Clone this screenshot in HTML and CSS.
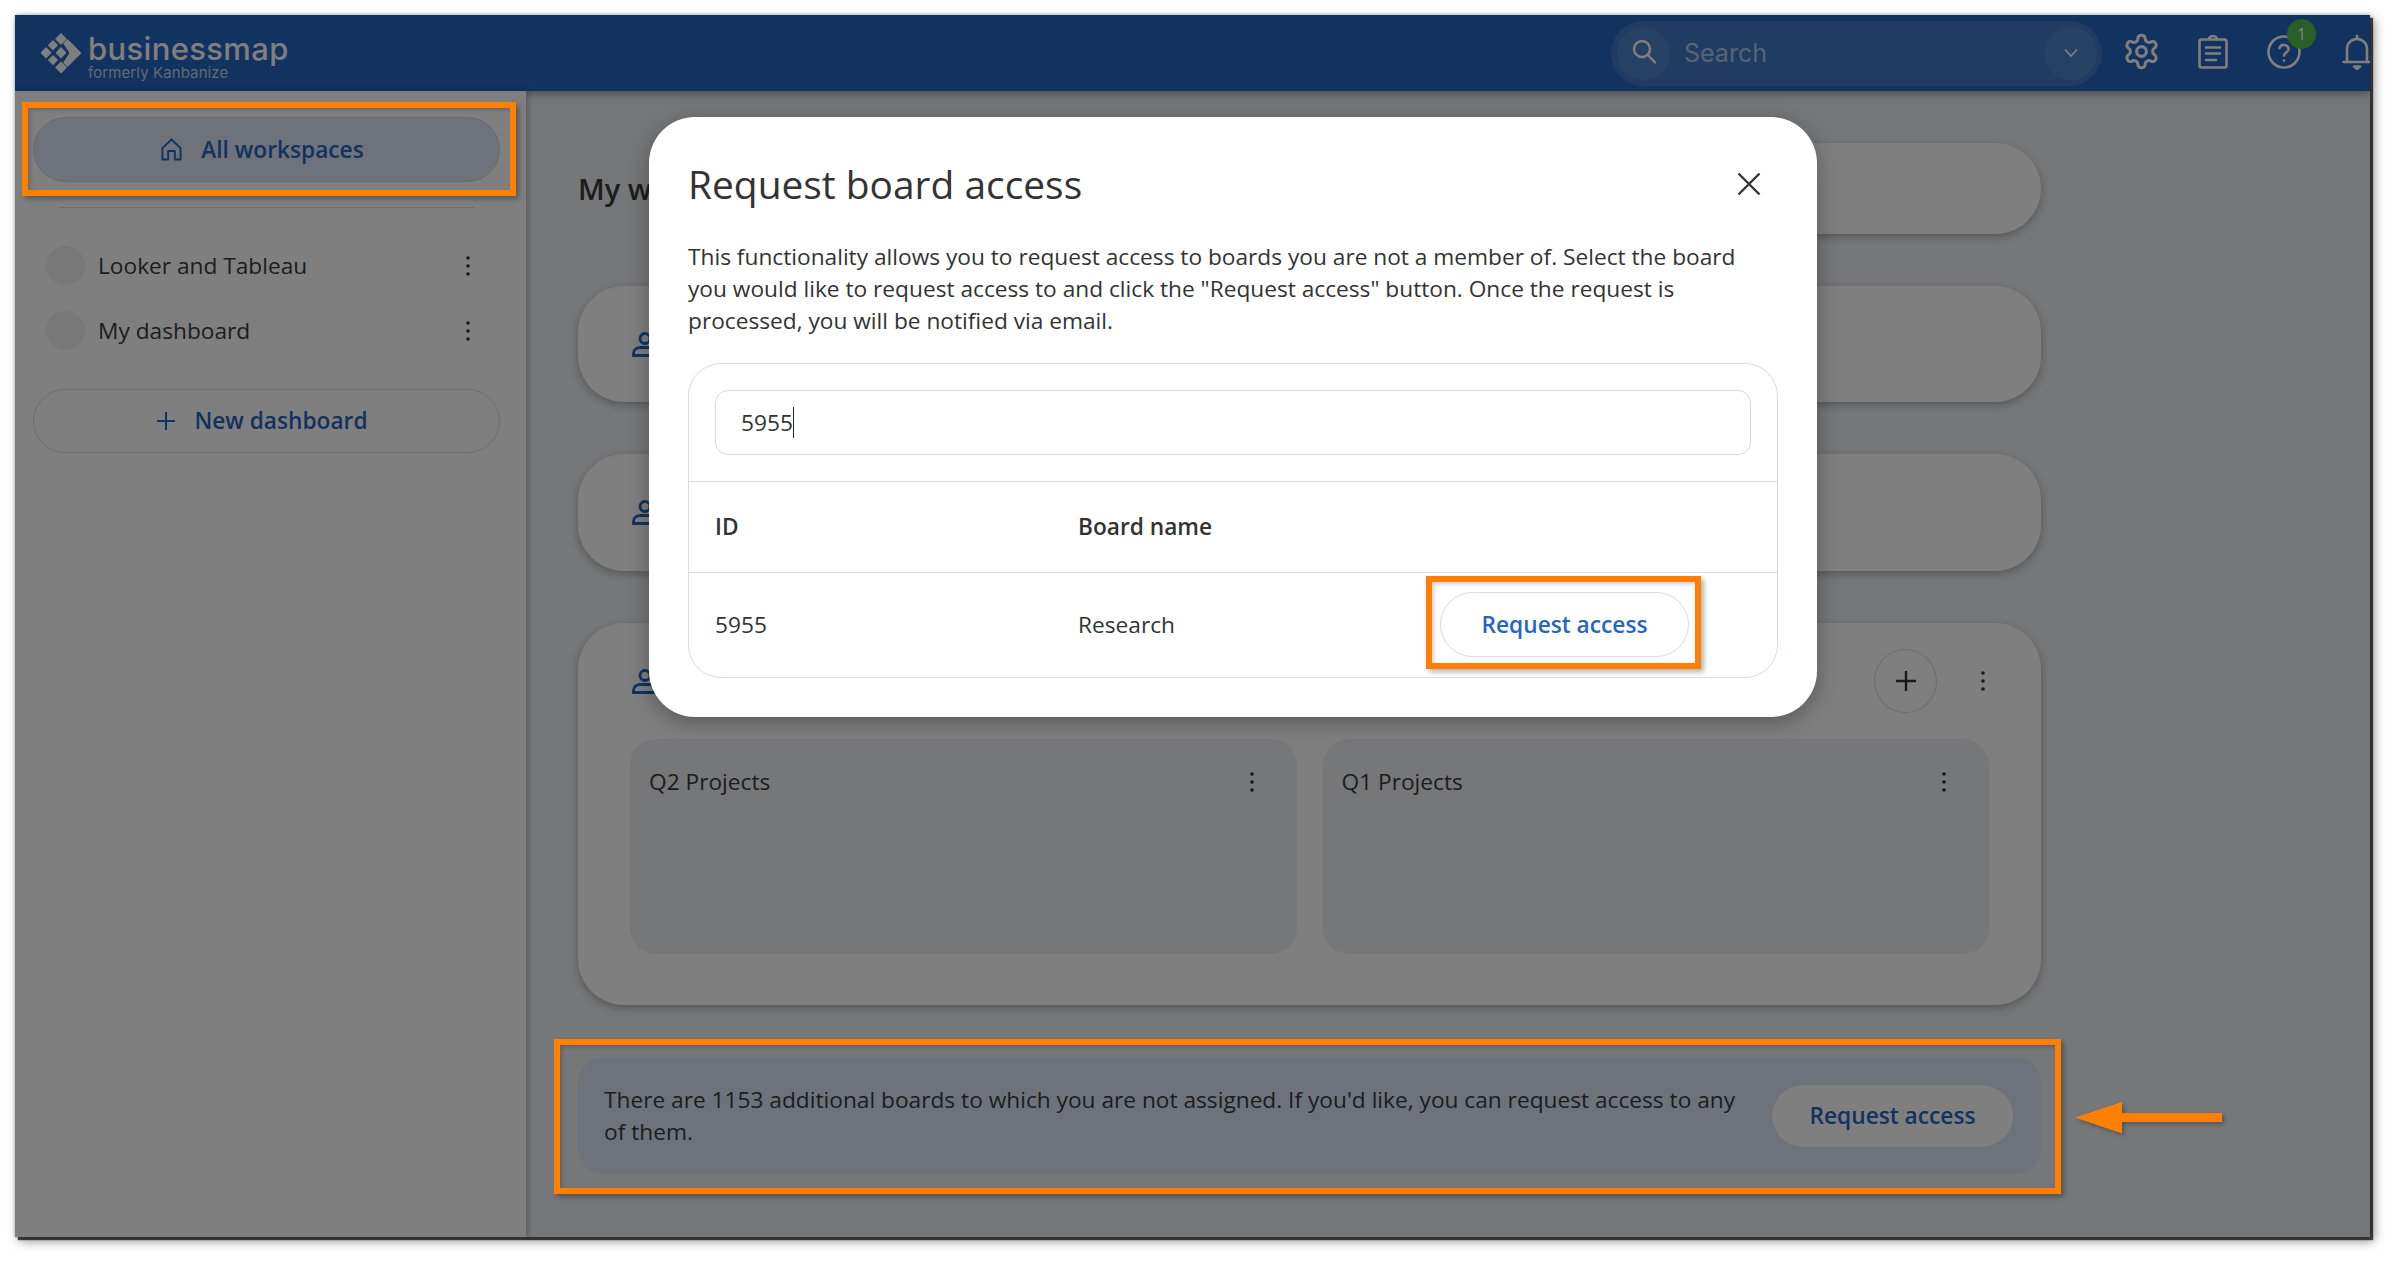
FILE: index.html
```html
<!DOCTYPE html>
<html lang="en">
<head>
<meta charset="utf-8">
<title>Request board access</title>
<link rel="stylesheet" href="styles.css">
</head>
<body>
<div class="app">
  <header class="topbar">
    <div class="logo">
      <svg class="logo-mark" viewBox="0 0 40 40" fill="#fff" stroke="#fff" stroke-width="1.400" stroke-linejoin="round">
        <path d="M20 1 25 6 20 11 15 6z"/>
        <path d="M12 8 16.200 12.300 12 16.500 7.800 12.300z"/>
        <path d="M5 15 9.800 19.800 5 24.500 .5 19.800z"/>
        <path d="M20 15 24.500 19.800 20 24.500 15.500 19.800z"/>
        <path d="M12 23 16.200 27 12 31.200 7.800 27z"/>
        <path d="M20 29.500 25 34.500 20 39.500 15 34.500z"/>
        <path d="M26.500 7 39.500 20 26.500 33 23 29.500 29.500 20 23 10.500z"/>
      </svg>
      <div class="logo-text">
        <span class="logo-name">businessmap</span>
        <span class="logo-sub">formerly Kanbanize</span>
      </div>
    </div>
    <div class="search">
      <span class="search-btn">
        <svg class="icon-search" viewBox="0 0 26 26" fill="none" stroke="#fff" stroke-width="2.400" stroke-linecap="round"><circle cx="11" cy="10" r="8"/><path d="M17 16 24 23.500"/></svg>
      </span>
      <span class="search-label">Search</span>
      <span class="search-btn">
        <svg class="icon-chev" viewBox="0 0 14 10" fill="none" stroke="#fff" stroke-width="1.800" stroke-linecap="round" stroke-linejoin="round"><path d="M1.500 2 7 8l5.500-6"/></svg>
      </span>
    </div>
    <div class="top-icons">
      <span class="top-icon">
        <svg class="icon-gear" viewBox="0 0 24 24" fill="none" stroke="#fff" stroke-width="1.900" stroke-linecap="round" stroke-linejoin="round"><path d="M12.220 2h-.44a2 2 0 0 0-2 2v.18a2 2 0 0 1-1 1.730l-.43.25a2 2 0 0 1-2 0l-.15-.08a2 2 0 0 0-2.730.73l-.22.38a2 2 0 0 0 .73 2.730l.15.1a2 2 0 0 1 1 1.720v.51a2 2 0 0 1-1 1.740l-.15.09a2 2 0 0 0-.73 2.730l.22.38a2 2 0 0 0 2.730.73l.15-.08a2 2 0 0 1 2 0l.43.25a2 2 0 0 1 1 1.730V20a2 2 0 0 0 2 2h.44a2 2 0 0 0 2-2v-.18a2 2 0 0 1 1-1.730l.43-.25a2 2 0 0 1 2 0l.15.08a2 2 0 0 0 2.730-.73l.22-.39a2 2 0 0 0-.73-2.730l-.15-.08a2 2 0 0 1-1-1.740v-.5a2 2 0 0 1 1-1.740l.15-.09a2 2 0 0 0 .73-2.730l-.22-.38a2 2 0 0 0-2.730-.73l-.15.08a2 2 0 0 1-2 0l-.43-.25a2 2 0 0 1-1-1.730V4a2 2 0 0 0-2-2z"/><circle cx="12" cy="12" r="3"/></svg>
      </span>
      <span class="top-icon">
        <svg class="icon-clip" viewBox="0 0 30 34" fill="none" stroke="#fff" stroke-width="2.600" stroke-linecap="round" stroke-linejoin="round"><rect x="1.500" y="4.500" width="27" height="28" rx="2"/><path d="M11 4.500a4 3.500 0 0 1 8 0M8 12.500h14M8 18.500h14M8 25h10"/></svg>
      </span>
      <span class="top-icon">
        <svg class="icon-help" viewBox="0 0 34 34" fill="none" stroke="#fff" stroke-width="2.600" stroke-linecap="round" stroke-linejoin="round"><circle cx="17" cy="17" r="15.500"/><path d="M12.500 13a4.700 4.700 0 0 1 9.100 1.300c0 3-4.500 3.500-4.500 6.200"/><path d="M17 25.500v.3"/></svg>
        <span class="badge">1</span>
      </span>
      <span class="top-icon">
        <svg class="icon-bell" viewBox="0 0 30 36" fill="none" stroke="#fff" stroke-width="2.600" stroke-linecap="round" stroke-linejoin="round"><path d="M1.500 28h27M5 28V15a10 10 0 0 1 20 0v13"/><path d="M15 1.800v3" /><path d="M12 32.500h6l-3 2.500z" fill="#fff"/></svg>
      </span>
    </div>
  </header>

  <div class="body-row">
    <aside class="sidebar">
      <div class="side-primary">
        <svg class="icon-home" viewBox="0 0 22 24" fill="none" stroke="currentColor" stroke-width="2" stroke-linejoin="round"><path d="M1.500 10.500 11 1.500l9.500 9v12h-6v-9h-7v9h-6z"/></svg>
        <span>All workspaces</span>
      </div>
      <div class="side-divider"></div>
      <div class="side-item">
        <span class="side-dot"></span>
        <span class="side-name">Looker and Tableau</span>
        <svg class="dots" viewBox="0 0 6 22" fill="currentColor"><circle cx="3" cy="3" r="1.800"/><circle cx="3" cy="11" r="1.800"/><circle cx="3" cy="19" r="1.800"/></svg>
      </div>
      <div class="side-item">
        <span class="side-dot"></span>
        <span class="side-name">My dashboard</span>
        <svg class="dots" viewBox="0 0 6 22" fill="currentColor"><circle cx="3" cy="3" r="1.800"/><circle cx="3" cy="11" r="1.800"/><circle cx="3" cy="19" r="1.800"/></svg>
      </div>
      <div class="side-new">
        <svg class="icon-plus" viewBox="0 0 18 18" fill="none" stroke="currentColor" stroke-width="2"><path d="M9 0v18M0 9h18"/></svg>
        <span>New dashboard</span>
      </div>
    </aside>

    <main class="content">
      <div class="intro">
        <h2 class="intro-title">My workspaces</h2>
        <div class="intro-card"></div>
      </div>
      <section class="ws ws-short">
        <svg class="icon-person" viewBox="0 0 26 25" fill="none" stroke="currentColor" stroke-width="2.800"><circle cx="13" cy="6.500" r="5"/><path d="M1.500 23.500v-2c0-4 3-6 7-6h9c4 0 7 2 7 6v2z"/></svg>
      </section>
      <section class="ws ws-short ws-short-b">
        <svg class="icon-person" viewBox="0 0 26 25" fill="none" stroke="currentColor" stroke-width="2.800"><circle cx="13" cy="6.500" r="5"/><path d="M1.500 23.500v-2c0-4 3-6 7-6h9c4 0 7 2 7 6v2z"/></svg>
      </section>
      <section class="ws ws-full">
        <div class="ws-head">
          <svg class="icon-person" viewBox="0 0 26 25" fill="none" stroke="currentColor" stroke-width="2.800"><circle cx="13" cy="6.500" r="5"/><path d="M1.500 23.500v-2c0-4 3-6 7-6h9c4 0 7 2 7 6v2z"/></svg>
          <span class="round-add">
            <svg class="icon-add" viewBox="0 0 20 20" fill="none" stroke="currentColor" stroke-width="2.400"><path d="M10 0v20M0 10h20"/></svg>
          </span>
          <svg class="dots" viewBox="0 0 6 22" fill="currentColor"><circle cx="3" cy="3" r="1.800"/><circle cx="3" cy="11" r="1.800"/><circle cx="3" cy="19" r="1.800"/></svg>
        </div>
        <div class="boards">
          <div class="board">
            <span>Q2 Projects</span>
            <svg class="dots" viewBox="0 0 6 22" fill="currentColor"><circle cx="3" cy="3" r="1.800"/><circle cx="3" cy="11" r="1.800"/><circle cx="3" cy="19" r="1.800"/></svg>
          </div>
          <div class="board">
            <span>Q1 Projects</span>
            <svg class="dots" viewBox="0 0 6 22" fill="currentColor"><circle cx="3" cy="3" r="1.800"/><circle cx="3" cy="11" r="1.800"/><circle cx="3" cy="19" r="1.800"/></svg>
          </div>
        </div>
      </section>
      <section class="notice">
        <p class="notice-text">There are 1153 additional boards to which you are not assigned. If you'd like, you can request access to any of them.</p>
        <span class="notice-btn">Request access</span>
      </section>
    </main>
  </div>
  <div class="scrim"></div>
</div>

<div class="modal">
  <div class="modal-head">
    <h1 class="modal-title">Request board access</h1>
    <svg class="icon-close" viewBox="0 0 24 24" fill="none" stroke="currentColor" stroke-width="2.400"><path d="M1.500 1.500l21 21M22.500 1.500l-21 21"/></svg>
  </div>
  <p class="modal-desc">This functionality allows you to request access to boards you are not a member of. Select the board you would like to request access to and click the "Request access" button. Once the request is processed, you will be notified via email.</p>
  <div class="picker">
    <div class="picker-search">
      <div class="picker-input">5955<span class="caret"></span></div>
    </div>
    <div class="picker-row picker-head">
      <span>ID</span>
      <span>Board name</span>
    </div>
    <div class="picker-row picker-item">
      <span>5955</span>
      <span>Research</span>
      <span class="access-btn">Request access</span>
    </div>
  </div>
</div>

<div class="callout callout-side"></div>
<div class="callout callout-btn"></div>
<div class="callout callout-notice"></div>
<svg class="callout-arrow" viewBox="0 0 147 32" fill="#ff8000"><path d="M0 15.500 47 0v11h100v9H47v11.500z"/></svg>
</body>
</html>
```

FILE: styles.css
```css
* { box-sizing: border-box; }
html, body { margin: 0; padding: 0; }
body {
  width: 2396px;
  height: 1264px;
  overflow: hidden;
  background: #fff;
  padding: 15px 26px 27px 15px;
  font-family: "Open Sans", "Noto Sans", sans-serif;
  font-size: 22.7px;
  line-height: 32px;
  color: #3a3a3a;
}
h1, h2, p { margin: 0; font-weight: 400; }

.app {
  position: relative;
  width: 100%;
  height: 100%;
  display: flex;
  flex-direction: column;
  overflow: hidden;
  background: #eceef2;
  box-shadow: 3px 3px 1px rgba(0,0,0,.7), 4px 4px 10px rgba(0,0,0,.45), 0 0 3px rgba(0,0,0,.3);
}
.scrim { position: absolute; inset: 0; background: rgba(0,0,0,.5); }

/* top bar */
.topbar {
  flex: none;
  height: 76px;
  display: flex;
  align-items: center;
  padding-left: 26px;
  background: #2464be;
  color: #fff;
  box-shadow: 0 3px 8px rgba(0,0,0,.35);
  position: relative;
  overflow: hidden;
}
.logo { flex: 1; display: flex; align-items: center; gap: 7px; }
.logo-mark { width: 40px; height: 40px; }
.logo-text { display: flex; flex-direction: column; font-family: "Inter", sans-serif; margin-top: 7px; }
.logo-name { font-size: 31px; line-height: 32px; font-weight: 500; letter-spacing: .35px; }
.logo-sub { font-size: 15px; line-height: 15px; color: rgba(255,255,255,.72); letter-spacing: .1px; }
.search {
  flex: none;
  width: 491px;
  height: 65px;
  margin-right: 3px;
  padding: 0 5px 0 6px;
  display: flex;
  align-items: center;
  gap: 14px;
  border-radius: 33px;
  background: rgba(255,255,255,.13);
}
.search-btn {
  flex: none;
  width: 53px;
  height: 53px;
  display: flex;
  align-items: center;
  justify-content: center;
  border-radius: 50%;
  background: rgba(255,255,255,.08);
}
.search-label {
  flex: 1;
  font-family: "Inter", sans-serif;
  font-size: 25px;
  color: rgba(255,255,255,.6);
}
.icon-search { width: 26px; height: 26px; margin: -2px 0 0 0; }
.icon-chev { width: 14px; height: 10px; }
.top-icons { flex: none; width: 265px; display: flex; }
.top-icon {
  flex: none;
  position: relative;
  width: 72px;
  height: 76px;
  display: flex;
  align-items: center;
  justify-content: center;
}
.icon-gear { width: 39px; height: 39px; margin-top: -3px; }
.icon-clip { width: 30px; height: 34px; margin-top: -3px; }
.icon-help { width: 34px; height: 34px; margin: -3px 2px 0 0; }
.icon-bell { width: 30px; height: 36px; margin-top: -3px; }
.badge {
  position: absolute;
  left: 38px;
  top: 4px;
  width: 29px;
  height: 30px;
  border-radius: 50%;
  background: #54bc50;
  color: #fff;
  font-size: 16px;
  line-height: 30px;
  text-align: center;
}

/* layout */
.body-row { flex: 1; min-height: 0; display: flex; }

/* sidebar */
.sidebar {
  flex: none;
  width: 511px;
  padding: 26px 26px 0 18px;
  background: #fff;
  box-shadow: 2px 0 6px rgba(0,0,0,.25);
  position: relative;
}
.side-primary, .side-new {
  display: flex;
  align-items: center;
  justify-content: center;
  gap: 19px;
  padding-right: 8px;
  border-radius: 33px;
  color: #2464be;
  font-weight: 600;
}
.side-primary {
  height: 65px;
  background: #dce6f6;
  border: 1px solid #ccd6e6;
}
.icon-home { width: 21px; height: 23px; }
.side-divider { height: 1px; margin: 25px 26px 25px; background: #d5d9de; }
.side-item {
  height: 65px;
  padding: 0 29px 0 13px;
  display: flex;
  align-items: center;
  gap: 13px;
}
.side-dot { flex: none; width: 39px; height: 39px; border-radius: 50%; background: #f0f1f3; }
.side-name { flex: 1; }
.dots { flex: none; width: 6px; height: 22px; color: #333; }
.side-new {
  height: 64px;
  margin-top: 26px;
  border: 1px solid #d8dce0;
}
.icon-plus { width: 18px; height: 18px; }

/* content */
.content {
  flex: 1;
  min-width: 0;
  padding: 52px 329px 0 52px;
  display: flex;
  flex-direction: column;
  gap: 52px;
}
.intro { height: 91px; display: flex; align-items: center; gap: 40px; }
.intro-title { font-size: 29px; font-weight: 600; white-space: nowrap; }
.intro-card, .ws {
  background: #fff;
  border-radius: 46px;
  box-shadow: 0 3px 8px rgba(0,0,0,.28);
}
.intro-card { flex: 1; height: 91px; }
.ws { padding: 0 52px 0 54px; color: #2464be; }
.ws-short { height: 116px; display: flex; align-items: center; }
.ws-short-b { height: 117px; }
.icon-person { flex: none; width: 26px; height: 25px; }
.ws-full { height: 382px; padding: 26px 52px 51px; }
.ws-head {
  height: 64px;
  display: flex;
  align-items: center;
  gap: 43px;
  color: #333;
}
.ws-head .icon-person { color: #2464be; margin: 0 auto 0 2px; }
.round-add {
  flex: none;
  width: 63px;
  height: 64px;
  display: flex;
  align-items: center;
  justify-content: center;
  border: 1px solid #d8d8d8;
  border-radius: 50%;
}
.icon-add { width: 20px; height: 20px; }
.ws-head .dots { margin-right: 3px; }
.boards {
  margin-top: 26px;
  display: grid;
  grid-template-columns: 1fr 1fr;
  gap: 26px;
}
.board {
  height: 215px;
  padding: 27px 42px 0 19px;
  display: flex;
  align-items: flex-start;
  justify-content: space-between;
  background: #eceef2;
  border-radius: 26px;
  color: #3a3a3a;
}
.board .dots { margin-top: 5px; }
.notice {
  height: 117px;
  padding: 0 27px 0 26px;
  display: flex;
  align-items: center;
  justify-content: space-between;
  background: #dce6f6;
  border-radius: 26px;
}
.notice-text { width: 1140px; }
.notice-btn {
  flex: none;
  width: 243px;
  height: 64px;
  display: flex;
  align-items: center;
  justify-content: center;
  background: #fff;
  border: 1px solid #dcdfe3;
  border-radius: 32px;
  color: #2464be;
  font-weight: 600;
}

/* modal */
.modal {
  position: absolute;
  left: 649px;
  top: 117px;
  width: 1168px;
  height: 600px;
  padding: 0 39px;
  background: #fff;
  border-radius: 46px;
  box-shadow: 0 6px 22px rgba(0,0,0,.3);
}
.modal-head {
  height: 124px;
  padding: 10px 17px 0 0;
  display: flex;
  align-items: center;
  justify-content: space-between;
}
.modal-title { font-size: 38.9px; line-height: 50px; color: #333; }
.icon-close { width: 24px; height: 24px; color: #333; }
.modal-desc { color: #333; }
.picker {
  margin-top: 26px;
  height: 315px;
  border: 1px solid #d5dde3;
  border-radius: 33px;
  color: #333;
}
.picker-search { padding: 26px 26px 26px; border-bottom: 1px solid #d5dde3; height: 118px; }
.picker-input {
  height: 65px;
  padding-left: 25px;
  display: flex;
  align-items: center;
  border: 1px solid #d5dde3;
  border-radius: 13px;
}
.caret { width: 1px; height: 31px; background: #222; }
.picker-row {
  padding: 0 26px;
  display: grid;
  grid-template-columns: 363px 362px 249px;
  align-items: center;
}
.picker-head { height: 91px; border-bottom: 1px solid #d5dde3; font-weight: 600; }
.picker-item { height: 104px; padding-bottom: 1px; }
.access-btn {
  height: 65px;
  display: flex;
  align-items: center;
  justify-content: center;
  border: 1px solid #d5dde3;
  border-radius: 33px;
  color: #2466c0;
  font-weight: 600;
}

/* annotations */
.callout {
  position: absolute;
  border: 6px solid #ff8000;
  box-shadow: 3px 3px 5px rgba(0,0,0,.3), inset 2px 2px 4px rgba(0,0,0,.2);
}
.callout-side { left: 22px; top: 102px; width: 494px; height: 94px; }
.callout-btn { left: 1426px; top: 576px; width: 275px; height: 93px; }
.callout-notice { left: 554px; top: 1039px; width: 1507px; height: 155px; }
.callout-arrow {
  position: absolute;
  left: 2075px;
  top: 1102px;
  width: 147px;
  height: 32px;
  filter: drop-shadow(2px 2px 2px rgba(0,0,0,.3));
}
```
